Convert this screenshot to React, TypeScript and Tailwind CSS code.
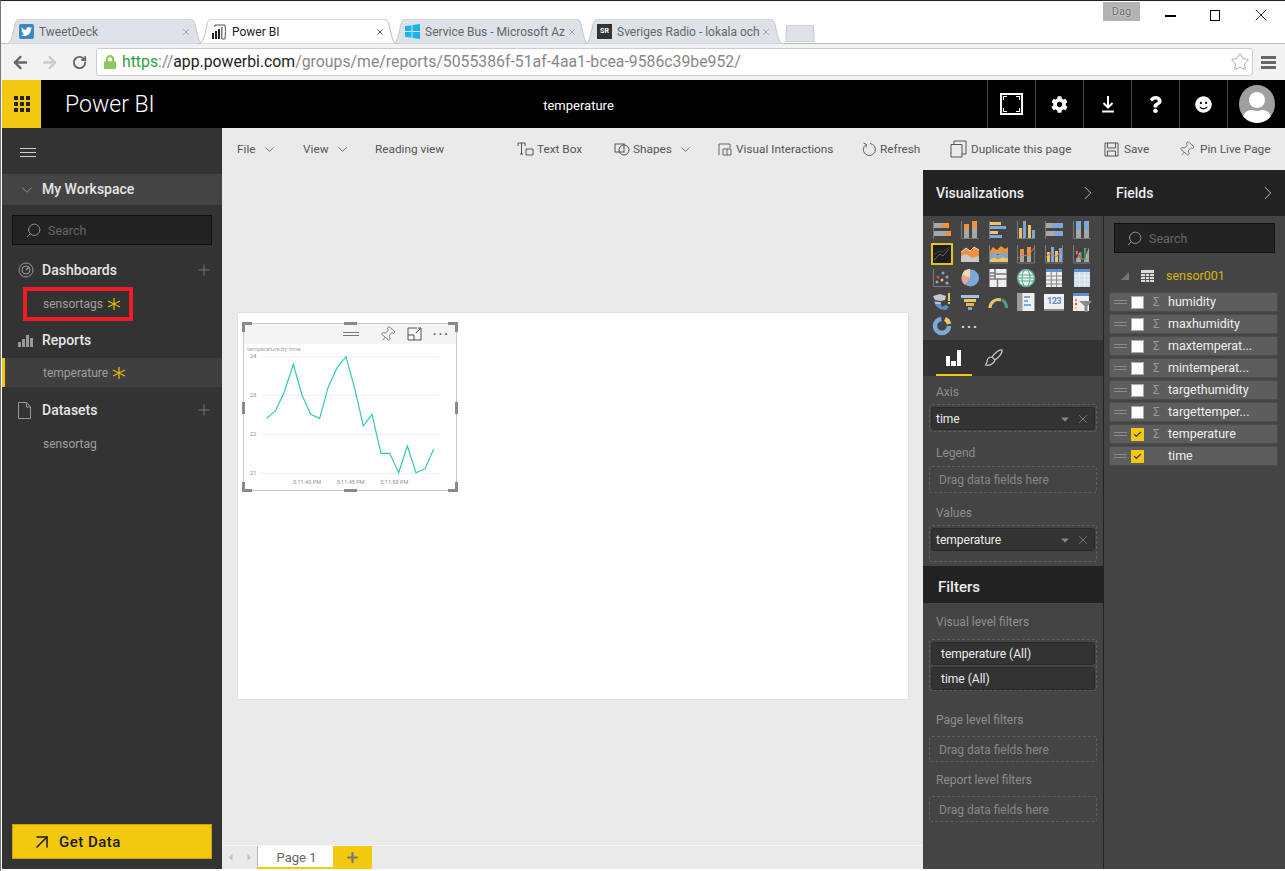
import React from "react";
import { ChevronDown, ChevronRight, Plus, X, Search, ArrowUpRight, Star, Pin, RotateCw, ArrowLeft, ArrowRight, Check } from "lucide-react";
import { FaTwitter, FaCog, FaSmile, FaQuestion, FaLock, FaCaretDown, FaUser, FaCaretLeft, FaCaretRight } from "react-icons/fa";

const ui = { fontFamily: 'Roboto, "Liberation Sans", sans-serif' };
const din = { fontFamily: 'Roboto, "Liberation Sans", sans-serif' };

function TabShape({ active }: { active?: boolean }) {
  return (
    <svg className="absolute inset-0 w-full h-full" viewBox="0 0 200 25" preserveAspectRatio="none">
      <path d="M0 25 C5 25 6 22 8 14 L10 5 C11 1 13 0 16 0 L184 0 C187 0 189 1 190 5 L192 14 C194 22 195 25 200 25 Z"
        fill={active ? "#ffffff" : "#dde1e8"} stroke={active ? "#b8bcc2" : "#c4c8ce"} vectorEffect="non-scaling-stroke" />
    </svg>
  );
}

function BrowserTab({ title, active, icon, w, ml }: { title: string; active?: boolean; icon: React.ReactNode; w: string; ml: string }) {
  return (
    <div className={`relative h-[25px] ${w} ${ml} ${active ? "z-10" : ""}`}>
      <TabShape active={active} />
      <div className="relative flex items-center h-full pl-[14px] pr-[14px] gap-[5px]">
        {icon}
        <span className={`flex-1 min-w-0 whitespace-nowrap text-[12px] ${active ? "text-[#222]" : "text-[#666]"}`}>{title}</span>
        <X size={10} className={active ? "text-[#444]" : "text-[#999]"} strokeWidth={2} />
      </div>
    </div>
  );
}

function PbiLogo() {
  return (
    <svg width="16" height="16" viewBox="0 0 16 16" fill="none">
      <path d="M4 3 L4 1 L14 1 Q15 7 14 15 L11 15" stroke="#555" strokeWidth="1" />
      <rect x="1" y="9" width="2" height="6" fill="#222" /><rect x="4" y="7" width="2" height="8" fill="#222" /><rect x="7" y="5" width="2" height="10" fill="#222" /><rect x="10" y="3" width="1.5" height="12" fill="#777" />
    </svg>
  );
}

function WinLogo() {
  return (
    <svg width="15" height="15" viewBox="0 0 15 15">
      <path d="M0 2.2 L6.5 1.2 V7 H0 Z M7.5 1 L15 0 V7 H7.5 Z M0 8 H6.5 V13.8 L0 12.8 Z M7.5 8 H15 V15 L7.5 14 Z" fill="#1ab4ec" />
    </svg>
  );
}

function Ico({ children }: { children: React.ReactNode }) {
  return <svg width="20" height="20" viewBox="0 0 20 20">{children}</svg>;
}

const O = "#f2913d", B = "#7da9d8", G = "#a8a8a8", Y = "#e9c46a", D = "#7a7a7a", L = "#eee";
const Axis = () => <path d="M1.5 1 V18.5 H19" stroke={D} strokeWidth="1" fill="none" />;

const vizIcons: React.ReactNode[] = [
  <Ico><path d="M1.5 1 V19" stroke={D} /><rect x="2" y="3" width="8" height="5" fill={G} /><rect x="10" y="3" width="7" height="5" fill={O} /><rect x="2" y="11" width="12" height="5" fill={G} /><rect x="14" y="11" width="5" height="5" fill={O} /></Ico>,
  <Ico><Axis /><rect x="4" y="9" width="5" height="9" fill={G} /><rect x="4" y="4" width="5" height="5" fill={O} /><rect x="12" y="8" width="5" height="10" fill={G} /><rect x="12" y="1" width="5" height="7" fill={O} /></Ico>,
  <Ico><path d="M1.5 1 V19" stroke={D} /><rect x="2" y="2" width="11" height="3" fill={Y} /><rect x="2" y="6" width="16" height="3" fill={B} /><rect x="2" y="11" width="8" height="3" fill={Y} /><rect x="2" y="15" width="12" height="3" fill={B} /></Ico>,
  <Ico><Axis /><rect x="3" y="8" width="3" height="10" fill={Y} /><rect x="7" y="1" width="3" height="17" fill={B} /><rect x="12" y="5" width="3" height="13" fill={Y} /><rect x="16" y="10" width="3" height="8" fill={B} /></Ico>,
  <Ico><path d="M1.5 1 V19" stroke={D} /><rect x="2" y="3" width="6" height="5" fill={G} /><rect x="8" y="3" width="11" height="5" fill={B} /><rect x="2" y="11" width="9" height="5" fill={G} /><rect x="11" y="11" width="8" height="5" fill={B} /></Ico>,
  <Ico><Axis /><rect x="4" y="9" width="5" height="9" fill={G} /><rect x="4" y="1" width="5" height="8" fill={B} /><rect x="12" y="10" width="5" height="8" fill={G} /><rect x="12" y="1" width="5" height="9" fill={B} /></Ico>,

  <div className="w-[22px] h-[22px] border-2 border-[#e3c31c] bg-[#1e1e1e] flex items-center justify-center"><svg width="18" height="18" viewBox="0 0 18 18"><path d="M1 15 L7 9 L10 11 L16 4" stroke="#666" fill="none" /><path d="M1 10 L6 6 L10 7 L16 2" stroke="#444" fill="none" /></svg></div>,
  <Ico><path d="M1 18 V8 L6 4 L10 7 L14 3 L19 6 V18 Z" fill={O} /><path d="M1 18 V12 L6 10 L12 14 L19 12 V18 Z" fill="#c9c9c9" /><path d="M1 8 L6 4 L10 7 L14 3 L19 6" stroke="#f3d9b8" fill="none" /></Ico>,
  <Ico><path d="M1.5 1 V19 H20" stroke={D} fill="none" /><path d="M2 7 L5 3 L9 6 L13 2 L17 5 L20 3 V10 H2 Z" fill={O} /><path d="M2 10 L6 8 L10 11 L14 8 L20 10 V14 L14 13 L10 15 L6 13 L2 15 Z" fill={B} /><path d="M2 15 L6 13 L10 15 L14 13 L20 14 V18 H2 Z" fill={Y} /></Ico>,
  <Ico><path d="M1.5 1 V19 H18.5 V1" stroke={D} fill="none" /><rect x="4" y="5" width="4" height="13" fill={G} /><rect x="4" y="5" width="4" height="5" fill={O} /><rect x="11" y="3" width="4" height="15" fill={O} /><rect x="11" y="11" width="4" height="7" fill={G} /><path d="M2 14 L7 11 L12 12 L18 4" stroke="#e86a5a" fill="none" /></Ico>,
  <Ico><path d="M1.5 1 V19 H18.5 V1" stroke={D} fill="none" /><rect x="3" y="8" width="3" height="10" fill={Y} /><rect x="7" y="3" width="3" height="15" fill={B} /><rect x="11" y="7" width="3" height="11" fill={Y} /><rect x="15" y="4" width="3" height="14" fill={B} /><path d="M2 13 L7 9 L12 13 L18 6" stroke="#e86a5a" fill="none" /></Ico>,
  <Ico><path d="M1.5 1 V19 H18.5" stroke={D} fill="none" /><rect x="4" y="7" width="5" height="11" fill={G} /><rect x="12" y="4" width="5" height="14" fill={G} /><path d="M4 14 L8 5 L12 13 L16 3" stroke="#4a3a3a" strokeWidth="2" fill="none" /><path d="M9 8 V15 H13 V4" stroke="#38a27a" strokeWidth="1.5" fill="none" /><path d="M5 8 L9 15" stroke="#e0524a" strokeWidth="1.5" /></Ico>,

  <Ico><Axis /><circle cx="6" cy="9" r="1.5" fill="#e0524a" /><circle cx="11" cy="5" r="1.5" fill={B} /><circle cx="15" cy="9" r="1.5" fill={B} /><circle cx="10" cy="12" r="1.5" fill={Y} /><circle cx="15" cy="15" r="1.5" fill={G} /><circle cx="5" cy="14" r="1.5" fill={B} /></Ico>,
  <Ico><circle cx="10.5" cy="10" r="8.5" fill={B} /><path d="M10 10 V1 A8 8 0 0 0 2 7 Z" fill="#f0d8b0" /><path d="M10 10 L2 7 A9 9 0 0 0 5 17 Z" fill="#e8a59a" /></Ico>,
  <Ico><rect x="1.5" y="1" width="17" height="18" fill="#f0f0f0" /><path d="M7 1 V11 M1.5 5 H7 M1.5 8 H7 M7 6 H18.5 M1.5 11 H18.5 M9.5 11 V19" stroke="#777" strokeWidth="1.5" /></Ico>,
  <Ico><circle cx="10" cy="10" r="8.5" fill="#eef4f4" stroke="#56a5b8" strokeWidth="1.5" /><path d="M2 7 H18 M1.5 10 H18.5 M2 13 H18" stroke="#5aa978" /><ellipse cx="10" cy="10" rx="4" ry="8.5" stroke="#5aa978" fill="none" /></Ico>,
  <Ico><rect x="2" y="1" width="16" height="18" fill={L} /><rect x="2" y="1" width="16" height="3" fill="#5b8fcb" /><path d="M7.3 4 V19 M12.6 4 V19 M2 8 H18 M2 12 H18 M2 16 H18" stroke="#888" /></Ico>,
  <Ico><rect x="2" y="1" width="16" height="18" fill="#cfdff0" /><rect x="2" y="1" width="16" height="3" fill="#5b8fcb" /><path d="M7.3 4 V19 M12.6 4 V19 M2 8 H18 M2 12 H18 M2 16 H18" stroke="#eee" /></Ico>,

  <Ico><path d="M1 4 L8 2 L14 4 L13 8 L9 9 L3 8 Z" fill="#c8c8c8" /><path d="M2 9 L8 10 L10 15 L14 13 L17 15 L14 18 L8 17 L4 14 Z" fill="#5b8fcb" /><path d="M17 1 V9 M17 10 V12" stroke={Y} strokeWidth="2" /><path d="M3 11 H9" stroke="#fff" /></Ico>,
  <Ico><rect x="1" y="3" width="18" height="3" fill="#a6c4e0" /><rect x="4" y="7" width="12" height="3" fill={Y} /><rect x="6" y="11" width="8" height="3" fill="#f0b048" /><rect x="8" y="15" width="4" height="3" fill={B} /></Ico>,
  <Ico><path d="M2 16 A8.5 8.5 0 0 1 13 8" stroke={Y} strokeWidth="3" fill="none" /><path d="M14 8 A8.5 8.5 0 0 1 18.5 16" stroke="#4fa37c" strokeWidth="3" fill="none" /><path d="M10 16 L12 12" stroke="#444" strokeWidth="1.5" /></Ico>,
  <Ico><rect x="1.5" y="1" width="17" height="18" fill="#f0f0f0" /><rect x="1.5" y="1" width="5" height="18" fill="#9c9c9c" /><path d="M8 5 H14 M8 9 H12 M8 13 H15" stroke="#5b8fcb" strokeWidth="1.5" /></Ico>,
  <div className="w-[20px] h-[17px] bg-[#f0f0f0] flex flex-col items-center justify-center leading-none border-b-2 border-[#888]"><span className="text-[9px] font-bold text-[#5b8fcb] tracking-tighter" style={din}>123</span></div>,
  <Ico><rect x="1" y="1" width="16" height="18" fill="#f0f0f0" /><rect x="1" y="1" width="16" height="3" fill="#5b8fcb" /><circle cx="4" cy="8" r="1.2" fill={O} /><circle cx="4" cy="12" r="1.2" fill="#e0524a" /><circle cx="4" cy="16" r="1.2" fill={Y} /><path d="M7 9 H20 L15.5 14 V20 H12.5 V14 Z" fill="#8a8a8a" /></Ico>,

  <Ico><circle cx="10" cy="10" r="7" stroke={B} strokeWidth="4.5" fill="none" strokeDasharray="32 12" /><path d="M13 3 A7 7 0 0 1 17 8" stroke={Y} strokeWidth="4.5" fill="none" /></Ico>,
  <span className="text-[#ddd] text-[14px] font-bold tracking-[2px] leading-none -mt-[6px]" style={din}>...</span>,
];

function Handle({ className }: { className: string }) {
  return <div className={`absolute bg-[#8a8a8a] ${className}`} />;
}

function Corner({ className, d }: { className: string; d: string }) {
  return (
    <svg className={`absolute ${className}`} width="10" height="10" viewBox="0 0 10 10">
      <path d={d} fill="#8a8a8a" />
    </svg>
  );
}

function ChartCard() {
  return (
    <div className="relative w-[214px] h-[168px] border border-[#c8c8c8]">
      <div className="h-[20px] bg-[#f4f4f4] flex items-center justify-end text-[#666] pr-[6px]">
        <div className="flex flex-col gap-[2px] mr-[20px] w-[16px]"><div className="h-px bg-[#777]" /><div className="h-px bg-[#777]" /></div>
        <Pin size={17} strokeWidth={1} className="rotate-[40deg]" />
        <svg width="15" height="14" viewBox="0 0 15 14" fill="none" stroke="#555" className="ml-[11px]"><path d="M10 1 H1 V13 H14 V4 M1 8 H7 V13 M9 6 L14 1 M11 1 H14 V4" /></svg>
        <span className="text-[13px] font-bold tracking-[2px] leading-none -mt-[7px] ml-[11px]">...</span>
      </div>
      <svg className="absolute left-[-9px] top-[-9px]" width="230" height="185" viewBox="0 0 690 555">
        <text x="36" y="107" fontSize="18" fill="#a8a8a8" fontFamily="Roboto, sans-serif">temperature by time</text>
        {[125, 241, 358, 475].map((y) => <line key={y} x1="78" x2="612" y1={y} y2={y} stroke="#e6e6e6" strokeWidth="2" />)}
        {([["24", 130], ["23", 247], ["22", 364], ["21", 480]] as [string, number][]).map(([t, y]) => (
          <text key={t} x="44" y={y} fontSize="18" fill="#8f8f8f" fontFamily="Roboto, sans-serif">{t}</text>
        ))}
        {([["5:11:40 PM", 174], ["5:11:45 PM", 305], ["5:11:50 PM", 436]] as [string, number][]).map(([t, x]) => (
          <text key={t} x={x} y="506" fontSize="17" fill="#8f8f8f" fontFamily="Roboto, sans-serif" textLength="84" lengthAdjust="spacingAndGlyphs">{t}</text>
        ))}
        <polyline fill="none" stroke="#2cc7b5" strokeWidth="3.5"
          points="95,310 122,287 148,230 175,148 201,240 227,298 254,310 280,215 307,157 333,125 359,220 385,333 411,298 438,415 464,415 491,473 517,393 543,473 570,461 596,403" />
      </svg>
      <Corner className="left-[-2px] top-[-2px]" d="M0 0 H10 V3 H3 V10 H0 Z" />
      <Corner className="right-[-2px] top-[-2px]" d="M0 0 H10 V10 H7 V3 H0 Z" />
      <Corner className="left-[-2px] bottom-[-2px]" d="M0 0 H3 V7 H10 V10 H0 Z" />
      <Corner className="right-[-2px] bottom-[-2px]" d="M7 0 H10 V10 H0 V7 H7 Z" />
      <Handle className="left-[100px] top-[-2px] w-[13px] h-[3px]" />
      <Handle className="left-[100px] bottom-[-2px] w-[13px] h-[3px]" />
      <Handle className="left-[-2px] top-[78px] w-[3px] h-[12px]" />
      <Handle className="right-[-2px] top-[78px] w-[3px] h-[12px]" />
    </div>
  );
}

function RibbonItem({ icon, label, chevron, w, iw }: { icon?: React.ReactNode; label: string; chevron?: boolean; w: string; iw?: string }) {
  return (
    <div className={`flex items-center shrink-0 ${w}`}>
      {icon && <div className={`flex items-center shrink-0 ${iw}`}>{icon}</div>}
      <span className="text-[11.8px] text-[#555] whitespace-nowrap pt-[2px]">{label}</span>
      {chevron && <ChevronDown size={15} strokeWidth={1.2} className="text-[#444] ml-[6px]" />}
    </div>
  );
}

function NavHead({ icon, label, plus }: { icon: React.ReactNode; label: string; plus?: boolean }) {
  return (
    <div className="flex items-center h-[30px] pl-[16px] pr-[9px]">
      <div className="w-[24px] flex items-center">{icon}</div>
      <span className="text-[14px] font-medium text-[#e6e6e6] flex-1" style={din}>{label}</span>
      {plus && <Plus size={18} strokeWidth={1} className="text-[#888]" />}
    </div>
  );
}

const Spark = () => (
  <svg width="14" height="14" viewBox="0 0 14 14" stroke="#e0b70f" strokeWidth="1.3" className="ml-[4px]">
    <path d="M7 1 V13 M1 4 L13 10 M1 10 L13 4" />
  </svg>
);

function SearchBox({ className }: { className: string }) {
  return (
    <div className={`flex items-center bg-[#232323] border border-[#111] ${className}`}>
      <Search size={17} strokeWidth={1.2} className="text-[#a0a0a0] -scale-x-100" />
      <span className="text-[12.5px] text-[#666] ml-[6px] pt-[2px]">Search</span>
    </div>
  );
}

function Chip({ label, actions = true }: { label: string; actions?: boolean }) {
  return (
    <div className="flex items-center h-[23px] mx-[1px] bg-[#333] rounded-[3px] border border-[#2a2a2a] pl-[4px] pr-[4px]">
      <span className={`text-[12px] text-[#eee] flex-1 pt-px ${actions ? "" : "pl-[5px]"}`}>{label}</span>
      {actions && <FaCaretDown size={12} className="text-[#888] mr-[5px]" />}
      {actions && <X size={14} strokeWidth={1} className="text-[#aaa]" />}
    </div>
  );
}

function Well({ children, className }: { children?: React.ReactNode; className: string }) {
  return <div className={`border border-dashed border-[#5e5e5e] rounded-[3px] mx-[6px] shrink-0 ${className}`}>{children}</div>;
}

function DropHint() {
  return <span className="text-[12px] text-[#888] pl-[9px] leading-[27px] h-full block">Drag data fields here</span>;
}

function FieldRow({ label, sigma = true, checked }: { label: string; sigma?: boolean; checked?: boolean }) {
  return (
    <div className="flex items-center h-[20px] mb-[2px] bg-[#5d5d5d] border border-[#4c4c4c] rounded-[2px] pl-[4px]">
      <div className="w-[13px] flex flex-col gap-[2px] mr-[4px]"><div className="h-px bg-[#8a8a8a]" /><div className="h-px bg-[#8a8a8a]" /></div>
      <div className={`w-[13px] h-[13px] flex items-center justify-center ${checked ? "bg-[#f2c811]" : "bg-white border border-[#aaa]"}`}>
        {checked && <Check size={9} strokeWidth={3} className="text-[#333]" />}
      </div>
      <span className="w-[24px] text-center text-[12px] text-[#999]" style={{ fontFamily: '"DejaVu Sans", sans-serif' }}>{sigma ? "Σ" : ""}</span>
      <span className="text-[12.5px] text-[#f0f0f0] whitespace-nowrap pt-px">{label}</span>
    </div>
  );
}

const Label = ({ children, className }: { children: React.ReactNode; className: string }) => (
  <div className={`text-[12px] text-[#8f8f8f] h-[16px] leading-[18px] pl-[13px] shrink-0 ${className}`}>{children}</div>
);

function PanelHead({ title, px }: { title: string; px: string }) {
  return (
    <div className={`h-[46px] shrink-0 bg-[#222] flex items-center justify-between ${px}`}>
      <span className="text-[14px] font-medium text-[#eee]" style={din}>{title}</span>
      <ChevronRight size={22} strokeWidth={1} className="text-[#ccc]" />
    </div>
  );
}

export default function App() {
  return (
    <div className="w-[1285px] h-[871px] flex flex-col bg-white border-t border-t-[#222] border-l border-l-[#777] overflow-hidden" style={ui}>
      {/* window chrome */}
      <div className="h-[43px] shrink-0 flex justify-between border-b border-[#b9bcc1]">
        <div className="flex items-end pl-[4px] h-[43px]">
          <BrowserTab w="w-[200px]" ml="" title="TweetDeck" icon={<span className="w-[15px] h-[15px] bg-[#3b88c3] rounded-[2px] flex items-center justify-center"><FaTwitter size={11} className="text-white" /></span>} />
          <BrowserTab active w="w-[202px]" ml="-ml-[8px]" title="Power BI" icon={<PbiLogo />} />
          <BrowserTab w="w-[200px]" ml="-ml-[8px]" title="Service Bus - Microsoft Az" icon={<WinLogo />} />
          <BrowserTab w="w-[202px]" ml="-ml-[8px]" title="Sveriges Radio - lokala och" icon={<span className="w-[15px] h-[15px] bg-[#333] text-[7px] leading-[15px] text-center text-white font-bold">SR</span>} />
          <div className="relative w-[30px] h-[17px] mb-[2px]"><TabShape /></div>
        </div>
        <div className="flex items-start pr-[14px]">
          <div className="w-[37px] h-[19px] mt-[1px] bg-[#b3b3b3] text-[11px] text-[#666] text-center leading-[19px] [text-shadow:0_0_2px_white]">Dag</div>
          <div className="w-[11px] h-[2px] bg-black ml-[25px] mt-[14px]" />
          <div className="w-[10px] h-[11px] border border-black ml-[34px] mt-[9px]" />
          <X size={20} strokeWidth={1} className="text-black ml-[31px] mt-[4px]" />
        </div>
      </div>
      <div className="h-[36px] shrink-0 bg-[#f2f2f2] flex items-center pl-[10px] pr-[9px] text-[#777]">
        <ArrowLeft size={19} strokeWidth={3} className="text-[#666]" />
        <ArrowRight size={19} strokeWidth={3} className="text-[#ccc] ml-[10px]" />
        <RotateCw size={15} strokeWidth={3} className="text-[#666] ml-[13px]" />
        <div className="flex-1 h-[28px] ml-[9px] bg-white border border-[#ccc] rounded-[3px] flex items-center pl-[6px] pr-[2px]">
          <FaLock size={14} className="text-[#8dc95a] mr-[5px]" />
          <span className="text-[15.8px] whitespace-nowrap flex-1">
            <span className="text-[#2f9e3f]">https</span><span className="text-[#888]">://</span><span className="text-[#222]">app.powerbi.com</span><span className="text-[#888]">/groups/me/reports/5055386f-51af-4aa1-bcea-9586c39be952/</span>
          </span>
          <Star size={20} strokeWidth={1} className="text-[#999]" />
        </div>
        <div className="flex flex-col gap-[2px] ml-[8px] w-[15px]"><div className="h-[3px] bg-[#666]" /><div className="h-[3px] bg-[#666]" /><div className="h-[3px] bg-[#666]" /></div>
      </div>
      {/* Power BI bar */}
      <div className="h-[48px] shrink-0 bg-black flex items-center ml-[1px]">
        <div className="w-[39px] h-full bg-[#f2c811] grid gap-[2px] content-center justify-center" style={{ gridTemplateColumns: "repeat(3,4px)" }}>
          {Array.from({ length: 9 }).map((_, i) => <div key={i} className="w-[4px] h-[4px] bg-[#222]" />)}
        </div>
        <span className="text-[23px] text-white ml-[24px] w-[477px] font-light pt-[3px]">Power BI</span>
        <span className="text-[13px] text-white w-[73px] text-center pt-[3px]">temperature</span>
        <div className="flex-1" />
        {[
          <div className="w-[23px] h-[22px] border-2 border-white relative"><div className="absolute left-[1px] top-[1px] w-[4px] h-[4px] border-l border-t border-white" /><div className="absolute right-[1px] top-[1px] w-[4px] h-[4px] border-r border-t border-white" /><div className="absolute left-[1px] bottom-[1px] w-[4px] h-[4px] border-l border-b border-white" /><div className="absolute right-[1px] bottom-[1px] w-[4px] h-[4px] border-r border-b border-white" /></div>,
          <FaCog size={17} className="text-white" />,
          <svg width="14" height="17" viewBox="0 0 14 17" fill="none" stroke="white" strokeWidth="2"><path d="M7 0 V11 M2.5 7 L7 11.5 L11.5 7 M1 15.5 H13" /></svg>,
          <FaQuestion size={17} className="text-white" />,
          <FaSmile size={17} className="text-white" />,
        ].map((ic, i) => (
          <div key={i} className="w-[48px] h-full border-l border-[#444] flex items-center justify-center">{ic}</div>
        ))}
        <div className="w-[58px] h-full border-l border-[#444] flex items-center justify-center">
          <div className="w-[36px] h-[38px] rounded-[50%] bg-[#a0a0a0] overflow-hidden flex items-end justify-center"><FaUser size={32} className="text-white -mb-[1px]" /></div>
        </div>
      </div>
      {/* Body */}
      <div className="flex-1 flex min-h-0 ml-[1px] mb-[2px]">
        <aside className="w-[220px] shrink-0 bg-[#333] flex flex-col">
          <div className="h-[46px] shrink-0 flex items-center pl-[18px] pt-[2px]">
            <div className="w-[16px] flex flex-col gap-[3px]"><div className="h-px bg-[#ccc]" /><div className="h-px bg-[#ccc]" /><div className="h-px bg-[#ccc]" /></div>
          </div>
          <div className="h-[31px] shrink-0 bg-[#444] flex items-center pl-[16px]">
            <ChevronDown size={18} strokeWidth={1} className="text-[#aaa]" />
            <span className="text-[14px] font-medium text-[#e6e6e6] ml-[6px]" style={din}>My Workspace</span>
          </div>
          <SearchBox className="h-[30px] mx-[10px] mt-[10px] pl-[12px]" />
          <div className="mt-[10px]">
            <NavHead label="Dashboards" plus icon={<svg width="16" height="16" viewBox="0 0 16 16" fill="none" stroke="#999"><circle cx="8" cy="8" r="7" /><circle cx="8" cy="8" r="4" /><path d="M8 8 L11 5" strokeWidth="1.5" /></svg>} />
          </div>
          <div className="ml-[21px] w-[110px] h-[34px] border-[4px] border-[#ee1c25] flex items-center pl-[16px] mt-[2px]">
            <span className="text-[12px] text-[#a0a0a0]">sensortags</span><Spark />
          </div>
          <div className="mt-[4px]">
            <NavHead label="Reports" icon={<svg width="15" height="13" viewBox="0 0 15 13" fill="#999"><rect x="0" y="8" width="3" height="5" /><rect x="4" y="5" width="3" height="8" /><rect x="8" y="1" width="3" height="12" /><rect x="12" y="4" width="3" height="9" /></svg>} />
          </div>
          <div className="h-[29px] bg-[#3f3f3f] border-l-[3px] border-[#f2c811] flex items-center pl-[38px] mt-[3px] pt-px">
            <span className="text-[12px] text-[#a0a0a0]">temperature</span><Spark />
          </div>
          <div className="mt-[8px]">
            <NavHead label="Datasets" plus icon={<svg width="13" height="17" viewBox="0 0 13 17" fill="none" stroke="#999"><path d="M.5 .5 H8.5 L12.5 5 V16.5 H.5 Z M8.5 .5 V5 H12.5" /></svg>} />
          </div>
          <div className="h-[30px] flex items-center pl-[41px] mt-[3px] pt-px">
            <span className="text-[12px] text-[#a0a0a0]">sensortag</span>
          </div>
          <div className="mt-auto mx-[10px] mb-[10px] h-[35px] bg-[#f2c811] border border-[#c8a50c] flex items-center pl-[17px]">
            <ArrowUpRight size={24} strokeWidth={1.5} className="text-[#1a1a1a]" />
            <span className="text-[15px] font-medium text-[#1a1a1a] ml-[5px] tracking-[0.5px] pt-[2px]" style={din}>Get Data</span>
          </div>
        </aside>
        <div className="flex-1 min-w-0 flex flex-col bg-[#eaeaea]">
          <div className="h-[42px] shrink-0 flex items-center pl-[15px]">
            <RibbonItem w="w-[66px]" label="File" chevron />
            <RibbonItem w="w-[72px]" label="View" chevron />
            <RibbonItem w="w-[142px]" label="Reading view" />
            <RibbonItem w="w-[97px]" iw="w-[20px]" label="Text Box" icon={<svg width="17" height="14" viewBox="0 0 17 14" fill="none" stroke="#555"><path d="M1 4 V1 H8 V4 M4.5 1 V12 M3 12 H6 M9 7 H16 V13 H9 Z" /></svg>} />
            <RibbonItem w="w-[104px]" iw="w-[19px]" label="Shapes" chevron icon={<svg width="17" height="15" viewBox="0 0 17 15" fill="none" stroke="#555"><rect x="1" y="2" width="9" height="8" /><circle cx="10" cy="8" r="5" /></svg>} />
            <RibbonItem w="w-[144px]" iw="w-[18px]" label="Visual Interactions" icon={<svg width="14" height="13" viewBox="0 0 14 13" fill="none" stroke="#666"><path d="M1 12 V1 H12 V5 M5 6 H13 V12 H5 Z M9 6 V12" /></svg>} />
            <RibbonItem w="w-[88px]" iw="w-[18px]" label="Refresh" icon={<svg width="15" height="15" viewBox="0 0 15 15" fill="none" stroke="#666"><path d="M4 2.5 A6 6 0 1 0 8 1.5 M1.5 1 L4.5 2.5 L4 5.5" /></svg>} />
            <RibbonItem w="w-[154px]" iw="w-[21px]" label="Duplicate this page" icon={<svg width="17" height="18" viewBox="0 0 17 18" fill="none" stroke="#555"><path d="M1 4.5 H12 V17 H1 Z M4 4 V1 H16 V14 H12" /></svg>} />
            <RibbonItem w="w-[74px]" iw="w-[20px]" label="Save" icon={<svg width="15" height="15" viewBox="0 0 15 15" fill="none" stroke="#555"><path d="M1 1 H14 V14 H1 Z M3.5 1 V6 H11.5 V1 M3.5 14 V9 H11.5 V14" /></svg>} />
            <RibbonItem w="w-[92px]" iw="w-[22px]" label="Pin Live Page" icon={<Pin size={17} strokeWidth={1} className="text-[#555] rotate-[40deg]" />} />
          </div>
          <div className="flex-1 min-h-0 flex">
            {/* canvas */}
            <div className="w-[701px] shrink-0 flex flex-col">
              <div className="flex-1 pt-[143px] pl-[16px]">
                <div className="w-[670px] h-[386px] bg-white pl-[5px] pt-[10px] shadow-[0_0_2px_rgba(0,0,0,0.1)]">
                  <ChartCard />
                </div>
              </div>
              <div className="h-[24px] shrink-0 flex items-stretch border-t border-[#f5f5f5]">
                <div className="w-[36px] flex items-center pl-[3px] gap-[7px] border-r border-[#bbb] text-[#c4c4c4]">
                  <FaCaretLeft size={11} /><FaCaretRight size={11} className="ml-[1px]" />
                </div>
                <div className="w-[75px] bg-white border-b-2 border-[#f2c811] flex items-center justify-center text-[13px] text-[#666] pt-[2px] pl-[2px]">Page 1</div>
                <div className="w-[39px] bg-[#f2c811] flex items-center justify-center"><Plus size={15} strokeWidth={3.5} className="text-[#777]" /></div>
              </div>
            </div>
            {/* visualizations */}
            <div className="w-[181px] shrink-0 flex flex-col bg-[#444] border-r border-[#222]">
              <PanelHead title="Visualizations" px="pl-[13px] pr-[4px]" />
              <div className="h-[124px] shrink-0 pt-[2px] pl-[5px] grid content-start" style={{ gridTemplateColumns: "repeat(6,28px)", gridAutoRows: "24px" }}>
                {vizIcons.map((ic, i) => <div key={i} className="flex items-center justify-center">{ic}</div>)}
              </div>
              <div className="h-[36px] shrink-0 bg-[#333] flex items-center pl-[13px] relative">
                <div className="w-[36px] h-full flex items-center justify-center border-b-2 border-[#f2c811]">
                  <svg width="16" height="17" viewBox="0 0 16 17" fill="white"><rect x="0" y="7" width="4" height="10" /><rect x="5" y="12" width="5" height="5" /><rect x="11" y="1" width="4" height="16" /></svg>
                </div>
                <svg width="20" height="20" viewBox="0 0 20 20" fill="none" stroke="#ccc" strokeWidth="1.2" className="ml-[12px]"><path d="M18 2 C15 1 10 6 8 9 L11 12 C14 10 19 5 18 2 Z M8 9 C5 9 3 11 3 14 L1.5 17 C5 18 10 16 11 12" /></svg>
              </div>
              <Label className="mt-[7px]">Axis</Label>
              <Well className="mt-[5px] h-[28px] pt-[2px]"><Chip label="time" /></Well>
              <Label className="mt-[12px]">Legend</Label>
              <Well className="mt-[6px] h-[27px]"><DropHint /></Well>
              <Label className="mt-[11px]">Values</Label>
              <Well className="mt-[5px] h-[37px] pt-[2px]"><Chip label="temperature" /></Well>
              <div className="h-[37px] mt-[4px] shrink-0 bg-[#222] flex items-center pl-[15px] pt-[5px]">
                <span className="text-[15px] font-medium text-[#eee]" style={din}>Filters</span>
              </div>
              <Label className="mt-[10px]">Visual level filters</Label>
              <Well className="mt-[10px] h-[52px] pt-[2px] flex flex-col gap-[2px]"><Chip label="temperature (All)" actions={false} /><Chip label="time (All)" actions={false} /></Well>
              <Label className="mt-[20px]">Page level filters</Label>
              <Well className="mt-[9px] h-[26px]"><DropHint /></Well>
              <Label className="mt-[9px]">Report level filters</Label>
              <Well className="mt-[9px] h-[26px]"><DropHint /></Well>
            </div>
            {/* fields */}
            <div className="flex-1 min-w-0 flex flex-col bg-[#444]">
              <PanelHead title="Fields" px="pl-[12px] pr-[6px]" />
              <SearchBox className="h-[30px] mx-[10px] mt-[7px] pl-[11px] shrink-0" />
              <div className="h-[20px] mt-[13px] flex items-center pl-[17px] shrink-0">
                <svg width="8" height="8" viewBox="0 0 8 8" fill="#777"><path d="M8 0 V8 H0 Z" /></svg>
                <svg width="13" height="12" viewBox="0 0 13 12" className="ml-[12px]"><rect width="13" height="12" fill="#ddd" /><path d="M0 3.5 H13 M0 6.5 H13 M0 9.5 H13 M4.5 3 V12 M8.5 3 V12" stroke="#555" /></svg>
                <span className="text-[12.5px] text-[#d8b70e] ml-[12px] pt-px">sensor001</span>
              </div>
              <div className="ml-[5px] mr-[7px] mt-[6px]">
                <FieldRow label="humidity" />
                <FieldRow label="maxhumidity" />
                <FieldRow label="maxtemperat..." />
                <FieldRow label="mintemperat..." />
                <FieldRow label="targethumidity" />
                <FieldRow label="targettemper..." />
                <FieldRow label="temperature" checked />
                <FieldRow label="time" sigma={false} checked />
              </div>
            </div>
          </div>
        </div>
      </div>
    </div>
  );
}
